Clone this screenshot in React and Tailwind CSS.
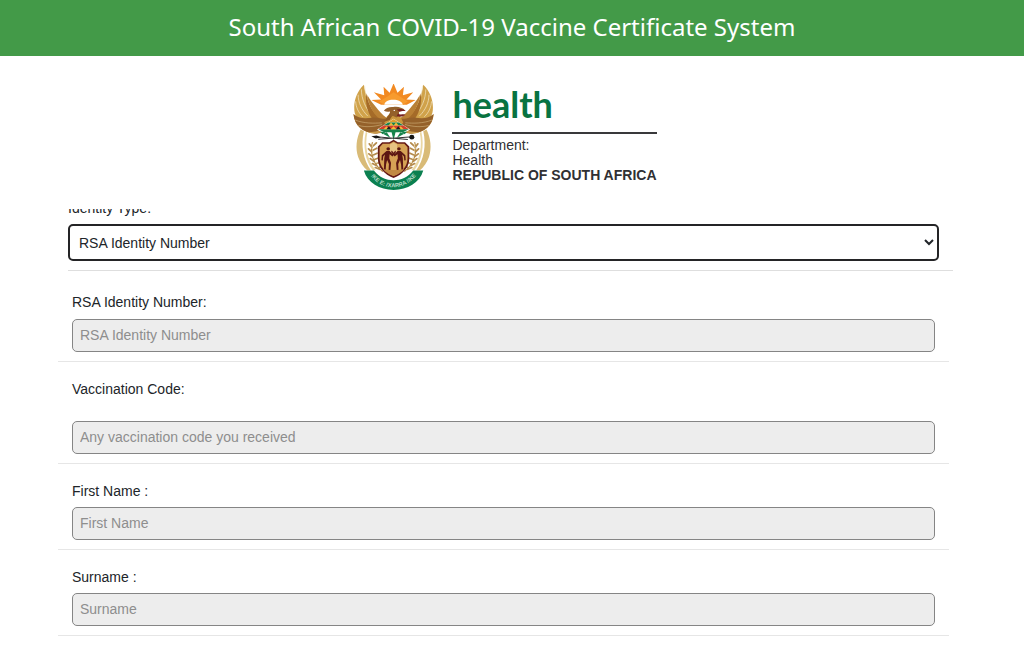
const fields = [
    { id: 'rsa-id', label: 'RSA Identity Number:', placeholder: 'RSA Identity Number', row: 'pt-5', gap: 'mb-[6px]' },
    { id: 'vaccination-code', label: 'Vaccination Code:', placeholder: 'Any vaccination code you received', row: 'pt-4', gap: 'mb-[21px]' },
    { id: 'first-name', label: 'First Name :', placeholder: 'First Name', row: 'pt-4', gap: 'mb-[5px]' },
    { id: 'surname', label: 'Surname :', placeholder: 'Surname', row: 'pt-4', gap: 'mb-[5px]' },
];

/**
 * Wing – one half of the bird's spread wings with its tusk and wheat ear.
 */
function Wing() {
    return (
        <g>
            <path d="M77 30C60 48 50 72 50 98c0 14 2 20 5 25-5-2-6-4-7-5 2 34 25 57 62 58 14 0 24-5 34-13l4-30-12-2c-16-18-40-42-46-60-8-12-11-26-13-41z" fill="#d0a24a" />
            <path d="M79 33c2 32 14 66 32 86M70 44c0 28 12 58 30 78M61 60c0 24 10 46 27 64M54 80c1 18 8 34 20 46" fill="none" stroke="#f3e6c8" strokeWidth="2" />
            <path d="M84 56c4 26 12 46 26 62 9 10 20 14 34 16l-2 18c-16 2-30-6-40-18-14-18-22-46-18-78z" fill="#a56b28" />
            <path d="M86 60c8 16 26 40 46 62l12 10-2 10c-12-4-26-12-36-26-9-14-17-34-20-56z" fill="#b98035" />
            <path d="M48 118c14 14 34 14 54 10 12 0 24 4 38 4l5 20c-8 16-22 24-37 24-34-2-58-24-60-58z" fill="#95612a" />
            <path d="M53 136c24 10 52 10 74 8M62 152c20 6 44 4 66-3" fill="none" stroke="#dcc08a" strokeWidth="1.5" />
            <path d="M88 172c14 0 30-3 44-12l-4 10c-12 8-26 8-40 2z" fill="#c99a4c" />
            <path d="M68 164c-12 26-15 56-7 82 6 17 14 30 26 41h10c-22-34-29-76-20-118z" fill="#d9bb77" />
            <path d="M82 172c-8 40-2 84 20 114h8c-25-34-31-74-23-114z" fill="#ead7a3" />
            <path d="M101 202c-8 28 1 66 29 88" fill="none" stroke="#b8863a" strokeWidth="3" />
            <path d="M100 218l-8-11M103 213l9-9M99 231l-9-9M101 227l12-7M101 245l-10-8M102 241l12-6M105 259l-10-8M106 254l12-5M112 272l-11-6M113 266l11-4M121 283l-12-5M121 277l10-4" stroke="#b58b4c" strokeWidth="5" strokeLinecap="round" />
            <path d="M102 208l-3 14M101 226l1 10M104 242l3 10M110 258l5 9" stroke="#ecdcae" strokeWidth="2" />
        </g>
    );
}

/** Human figure on the shield, mirrored for the pair. */
function Figure() {
    return (
        <g fill="#5c1713">
            <circle cx="145" cy="222" r="5" />
            <path d="M140 228h9l8 9 8-10 2 4-10 14-8-7-1 12 5 14-2 23h-5l1-20-5-12-3 14-1 18h-5l1-36 2-12-5 6-1 12-4-1 1-15z" />
        </g>
    );
}

function Emblem() {
    return (
        <svg viewBox="33 28 254 320" className="h-[107px] w-[85px] shrink-0" role="img" aria-label="Coat of arms">
            <g transform="translate(-11 0) scale(1.07 1)">
                <path d="M98 76l27-2-20-21 29 9-2-26 17 18 11-28 11 28 18-18-3 26 29-9-19 21 26 2-25 14h-72z" fill="#f28a22" />
                <path d="M120 80l22-14 18-13 19 13 21 14-14 10h-52z" fill="#f79b2e" />
                <path d="M134 90c2-10 11-15 25-15s24 5 27 15z" fill="#fff" />
                <Wing />
                <g transform="translate(320 0) scale(-1 1)"><Wing /></g>

                <path d="M141 126l18-21 20 21 8 17-27 37-26-37z" fill="#c9963c" />
                <path d="M150 104c2 12-4 18-12 28l-5 10 16-6 14-24z" fill="#8d5922" />
                <path d="M133 108c4-8 15-12 26-11 11-2 25 0 34 11-9-1-13 1-18 2 2 10-2 15-7 18l-9-4-11 1c6-8 4-13 1-15-6 2-11 0-16-2z" fill="#94602a" />
                <path d="M169 104c11-3 20-2 25 5-9-1-13 1-18 2z" fill="#7a2020" />
                <path d="M172 117c7 4 15 0 21 3-6 6-17 7-24 4z" fill="#752222" />
                <circle cx="162" cy="107" r="2" fill="#fff" />

                <path d="M160 132l46 32-46 31-46-31z" fill="#fff" />
                <path d="M160 133l15 10h-30z" fill="#de9c2d" />
                <path d="M145 143h30l13 9h-56z" fill="#16834b" />
                <path d="M132 152h56l15 11h-86z" fill="#d43f2c" />
                <path d="M117 163h86l-17 9h-52z" fill="#16834b" />
                <path d="M146 152l7-9 7 9zM160 152l7-9 7 9zM132 163l8-9 8 9zM152 163l8-9 8 9zM172 163l8-9 8 9z" fill="#f5b935" />
                <path d="M140 163l7-9 6 9zM167 163l6-9 7 9z" fill="#1b1b1b" />
                <path d="M154 170h12l-6 26zM141 172l10 17-21-12zM179 172l-10 17 21-12z" fill="#16834b" />
                <path d="M122 170l16 2-9 6zM198 170l-16 2 9 6z" fill="#16834b" />

                <path d="M103 185l97 9M117 193l97-7" stroke="#333" strokeWidth="3" />
                <path d="M98 184l15-2 12 6-15 3z" fill="#161616" />
                <circle cx="211" cy="187" r="7" fill="#161616" />

                <path d="M160 195l12 7h20l12 13v34c0 30-18 48-44 60-26-12-44-30-44-60v-34l12-13h20z" fill="#651a16" />
                <path d="M160 200l11 7h19l9 10v32c0 26-15 42-39 54-24-12-39-28-39-54v-32l9-10h19z" fill="#d6a255" />
                <path d="M160 203l10 6v26h-20v-26z" fill="#e8c383" />
                <Figure />
                <g transform="translate(320 0) scale(-1 1)"><Figure /></g>
                <path d="M130 282c18 4 42 4 60 0-7 9-16 16-30 21-14-5-23-12-30-21z" fill="#c28943" />

                <path d="M77 287h28c16 21 34 29 55 29s39-8 55-29h28c-10 37-44 58-83 58s-73-21-83-58z" fill="#0b8050" />
            </g>
            <path id="motto-arc" d="M90 300c20 27 46 37 70 37s50-11 70-38" fill="none" />
            <text fontFamily="Liberation Sans, sans-serif" fontSize="17" fontWeight="700" fill="#b9dcc8">
                <textPath href="#motto-arc" startOffset="50%" textAnchor="middle">!KE E: /XARRA //KE</textPath>
            </text>
        </svg>
    );
}

function Logo() {
    return (
        <div className="flex justify-center pt-7 pb-[18px] pr-4">
            <div className="flex gap-4">
                <Emblem />
                <div className="text-sm leading-[15px] text-[#303033]">
                    <div className="mb-2 font-['Lato'] text-[36px] leading-10 font-bold text-[#087341]">health</div>
                    <div className="mb-1 border-t-2 border-[#39393b]" />
                    <p>Department:</p>
                    <p>Health</p>
                    <p className="font-bold">REPUBLIC OF SOUTH AFRICA</p>
                </div>
            </div>
        </div>
    );
}

function Field({ field }) {
    return (
        <div className={`mr-1 border-b border-[#e6e6e6] px-[14px] pb-[9px] ${field.row}`}>
            <label htmlFor={field.id} className={`block leading-[22px] ${field.gap}`}>{field.label}</label>
            <input
                id={field.id}
                type="text"
                disabled
                placeholder={field.placeholder}
                className="block h-[33px] w-full rounded-[5px] border border-[#858585] bg-[#ededed] px-[7px] pb-0.5 placeholder:text-[#8e8e8e]"
            />
        </div>
    );
}

export default function App() {
    return (
        <div className="min-h-screen bg-white font-['Liberation_Sans',Arial,sans-serif] text-[#212529]">
            <header className="bg-[#439a48] px-4 pt-[7px] pb-[9px] text-center font-['Noto_Sans'] text-2xl leading-10 text-white">
                <h1>South African COVID-19 Vaccine Certificate System</h1>
            </header>
            <Logo />
            <form className="overflow-hidden pr-[71px] pl-[58px] text-sm">
                <div className="ml-[10px] border-b border-[#dedede] pb-[9px]">
                    <label htmlFor="identity-type" className="-mt-3 mb-[5px] block leading-[22px]">Identity Type:</label>
                    <div className="pr-[14px]">
                        <select
                            id="identity-type"
                            defaultValue="rsa"
                            className="block h-[37px] w-full rounded-[5px] border-2 border-[#242426] bg-white pl-[5px]"
                        >
                            <option value="rsa">RSA Identity Number</option>
                            <option value="passport">Passport Number</option>
                            <option value="asylum">Asylum Seeker Number</option>
                        </select>
                    </div>
                </div>
                {fields.map((field) => (
                    <Field key={field.id} field={field} />
                ))}
            </form>
        </div>
    );
}
